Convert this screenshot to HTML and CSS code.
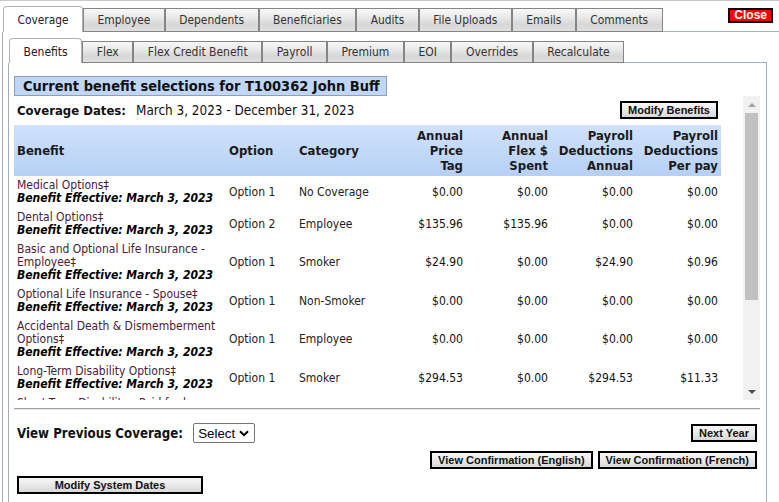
FILE: index.html
```html
<!DOCTYPE html>
<html>
<head>
<meta charset="utf-8">
<link rel="stylesheet" href="styles.css">
</head>
<body>
<div class="page">
  <div class="tabbar">
    <div class="tab active">Coverage</div>
    <div class="tab">Employee</div>
    <div class="tab">Dependents</div>
    <div class="tab">Beneficiaries</div>
    <div class="tab">Audits</div>
    <div class="tab">File Uploads</div>
    <div class="tab">Emails</div>
    <div class="tab">Comments</div>
    <div class="tab-fill"><button class="btn close">Close</button></div>
  </div>
  <div class="outer">
    <div class="subtabbar">
      <div class="subtab active">Benefits</div>
      <div class="subtab">Flex</div>
      <div class="subtab">Flex Credit Benefit</div>
      <div class="subtab">Payroll</div>
      <div class="subtab">Premium</div>
      <div class="subtab">EOI</div>
      <div class="subtab">Overrides</div>
      <div class="subtab">Recalculate</div>
      <div class="subtab-fill"></div>
    </div>
    <div class="inner">
      <div class="title">Current benefit selections for T100362 John Buff</div>
      <div class="scroll">
        <div class="scroll-content">
          <div class="dates-row">
            <span class="dates-label">Coverage Dates:</span>
            <span class="dates">March 3, 2023 - December 31, 2023</span>
            <button class="btn modify">Modify Benefits</button>
          </div>
          <table class="benefits">
            <colgroup>
              <col class="c-benefit"><col class="c-option"><col class="c-cat">
              <col class="c-num"><col class="c-num"><col class="c-num"><col class="c-num">
            </colgroup>
            <thead>
              <tr>
                <th class="left">Benefit</th>
                <th class="left">Option</th>
                <th class="left">Category</th>
                <th>Annual<br>Price<br>Tag</th>
                <th>Annual<br>Flex $<br>Spent</th>
                <th>Payroll<br>Deductions<br>Annual</th>
                <th>Payroll<br>Deductions<br>Per pay</th>
              </tr>
            </thead>
            <tbody>
              <tr>
                <td><div class="bname">Medical Options‡</div><div class="beff">Benefit Effective: March 3, 2023</div></td>
                <td>Option 1</td><td>No Coverage</td>
                <td class="num">$0.00</td><td class="num">$0.00</td><td class="num">$0.00</td><td class="num">$0.00</td>
              </tr>
              <tr>
                <td><div class="bname">Dental Options‡</div><div class="beff">Benefit Effective: March 3, 2023</div></td>
                <td>Option 2</td><td>Employee</td>
                <td class="num">$135.96</td><td class="num">$135.96</td><td class="num">$0.00</td><td class="num">$0.00</td>
              </tr>
              <tr>
                <td><div class="bname">Basic and Optional Life Insurance - Employee‡</div><div class="beff">Benefit Effective: March 3, 2023</div></td>
                <td>Option 1</td><td>Smoker</td>
                <td class="num">$24.90</td><td class="num">$0.00</td><td class="num">$24.90</td><td class="num">$0.96</td>
              </tr>
              <tr>
                <td><div class="bname">Optional Life Insurance - Spouse‡</div><div class="beff">Benefit Effective: March 3, 2023</div></td>
                <td>Option 1</td><td>Non-Smoker</td>
                <td class="num">$0.00</td><td class="num">$0.00</td><td class="num">$0.00</td><td class="num">$0.00</td>
              </tr>
              <tr>
                <td><div class="bname">Accidental Death &amp; Dismemberment Options‡</div><div class="beff">Benefit Effective: March 3, 2023</div></td>
                <td>Option 1</td><td>Employee</td>
                <td class="num">$0.00</td><td class="num">$0.00</td><td class="num">$0.00</td><td class="num">$0.00</td>
              </tr>
              <tr>
                <td><div class="bname">Long-Term Disability Options‡</div><div class="beff">Benefit Effective: March 3, 2023</div></td>
                <td>Option 1</td><td>Smoker</td>
                <td class="num">$294.53</td><td class="num">$0.00</td><td class="num">$294.53</td><td class="num">$11.33</td>
              </tr>
              <tr>
                <td><div class="bname">Short-Term Disability - Paid for by Employee‡</div><div class="beff">Benefit Effective: March 3, 2023</div></td>
                <td>Option 1</td><td>Employee</td>
                <td class="num">$0.00</td><td class="num">$0.00</td><td class="num">$0.00</td><td class="num">$0.00</td>
              </tr>
            </tbody>
          </table>
        </div>
        <div class="scrollbar">
          <div class="sb-btn"><span class="arrow-up"></span></div>
          <div class="sb-track"><div class="sb-thumb"></div></div>
          <div class="sb-btn"><span class="arrow-down"></span></div>
        </div>
      </div>
      <div class="rule"></div>
      <div class="footer">
        <div class="footer-row first">
          <div class="prev">
            <span class="prev-label">View Previous Coverage:</span>
            <span class="select-wrap">
              <select class="select"><option>Select</option></select>
              <svg class="chev" width="10" height="7" viewBox="0 0 10 7"><path d="M1 1.2 L5 5.2 L9 1.2" fill="none" stroke="#000" stroke-width="2"/></svg>
            </span>
          </div>
          <button class="btn">Next Year</button>
        </div>
        <div class="footer-row confirm">
          <button class="btn">View Confirmation (English)</button>
          <button class="btn">View Confirmation (French)</button>
        </div>
        <div class="footer-row last">
          <button class="btn sysdates">Modify System Dates</button>
        </div>
      </div>
    </div>
  </div>
</div>
</body>
</html>
```
FILE: styles.css
```css
html, body {
  margin: 0;
  height: 100%;
  background: #fff;
}
body {
  font-family: "DejaVu Sans Condensed", "DejaVu Sans", sans-serif;
  font-size: 12px;
  color: #222;
}
.page {
  box-sizing: border-box;
  height: 502px;
  border-top: 1px solid #c8c8c8;
  display: flex;
  flex-direction: column;
  overflow: hidden;
}

/* main tabs */
.tabbar {
  display: flex;
  align-items: flex-end;
  height: 31px;
  padding-left: 3px;
  flex-shrink: 0;
}
.tab {
  box-sizing: border-box;
  height: 24px;
  padding: 0 13.5px;
  line-height: 22px;
  font-size: 11.85px;
  color: #333;
  border: 1px solid #858585;
  background: linear-gradient(to bottom, #f8f8f8 0%, #e8e8e8 40%, #d7d7d7 70%, #e0e0e0 100%);
  white-space: nowrap;
}
.tab.active {
  height: 26px;
  padding: 2px 13.5px 1px;
  border-color: #b0b0b0;
  border-bottom: none;
  border-radius: 4px 4px 0 0;
  background: #fff;
  color: #222;
}
.tab-fill {
  flex: 1;
  align-self: stretch;
  border-bottom: 1px solid #9fb1c1;
  display: flex;
  justify-content: flex-end;
  align-items: flex-start;
  padding: 7px 6px 0 0;
}

/* outer panel */
.outer {
  flex: 1;
  margin-left: 2px;
  border-left: 1px solid #a3adb8;
  padding: 6px 0 0 5px;
  display: flex;
  flex-direction: column;
}
.subtabbar {
  display: flex;
  align-items: flex-end;
  width: 759px;
  padding-left: 1px;
  box-sizing: border-box;
  height: 25px;
  flex-shrink: 0;
}
.subtab {
  box-sizing: border-box;
  height: 22px;
  padding: 0 13.5px;
  line-height: 20px;
  font-size: 12px;
  color: #333;
  border: 1px solid #858585;
  background: linear-gradient(to bottom, #f8f8f8 0%, #e8e8e8 40%, #d7d7d7 70%, #e0e0e0 100%);
  white-space: nowrap;
}
.subtab.active {
  height: 25px;
  padding: 3px 13.5px 1px;
  border-color: #b0b0b0;
  border-bottom: none;
  border-radius: 4px 4px 0 0;
  background: #fff;
  color: #222;
}
.subtab-fill {
  flex: 1;
  align-self: stretch;
  border-bottom: 1px solid #9fb1c1;
}

/* inner panel */
.inner {
  flex: 1;
  width: 759px;
  box-sizing: border-box;
  border-left: 1px solid #a3adb8;
  border-right: 1px solid #9fb1c1;
  padding: 13px 6px 0 5px;
}
.title {
  width: fit-content;
  box-sizing: border-box;
  height: 20px;
  line-height: 18px;
  padding: 0 6px 0 8px;
  border: 1px solid #8c9fb8;
  background: #bfd6f7;
  font-weight: bold;
  font-size: 14.5px;
  color: #111;
  white-space: nowrap;
}

/* scroll area */
.scroll {
  display: flex;
  height: 304px;
}
.scroll-content {
  flex: 1;
  overflow: hidden;
  padding-top: 4px;
}
.dates-row {
  width: 707px;
  box-sizing: border-box;
  display: flex;
  align-items: center;
  height: 20px;
  padding: 0 3px;
  margin-bottom: 5px;
  color: #111;
}
.dates-label {
  font-weight: bold;
  font-size: 13px;
}
.dates {
  margin-left: 10px;
  font-size: 13.4px;
}
.btn.modify {
  margin-left: auto;
}

.benefits {
  width: 707px;
  table-layout: fixed;
  border-collapse: collapse;
}
.c-benefit { width: 212px; }
.c-option { width: 70px; }
.c-cat { width: 85px; }
.c-num { width: 85px; }
.benefits th {
  padding: 3px;
  font-size: 13px;
  line-height: 15px;
  font-weight: bold;
  text-align: right;
  vertical-align: middle;
  color: #1a1a1a;
  background: linear-gradient(to bottom, #cfe1fb 0%, #c3d9f8 50%, #b5cff5 100%);
}
.benefits th.left {
  text-align: left;
}
.benefits td {
  padding: 3px;
  line-height: 13px;
  vertical-align: middle;
  color: #222;
  white-space: nowrap;
}
.benefits td:first-child {
  white-space: normal;
}
.benefits td.num {
  text-align: right;
  color: #111;
}
.bname {
  color: #4a2238;
}
.beff {
  font-weight: bold;
  font-style: italic;
  color: #000;
}

/* fake scrollbar */
.scrollbar {
  width: 17px;
  background: #f1f1f1;
  display: flex;
  flex-direction: column;
}
.sb-btn {
  height: 17px;
  display: flex;
  align-items: center;
  justify-content: center;
}
.arrow-up {
  width: 0;
  height: 0;
  border-left: 4px solid transparent;
  border-right: 4px solid transparent;
  border-bottom: 4px solid #a3a3a3;
}
.arrow-down {
  width: 0;
  height: 0;
  border-left: 4px solid transparent;
  border-right: 4px solid transparent;
  border-top: 4px solid #505050;
}
.sb-track {
  flex: 1;
}
.sb-thumb {
  margin-left: 2px;
  width: 13px;
  height: 187px;
  background: #c1c1c1;
}

.rule {
  margin-top: 8px;
  border-top: 1px solid #a0a0a0;
  border-bottom: 1px solid #e8e8e8;
}

/* footer */
.footer {
  padding: 0 3px;
}
.footer-row {
  display: flex;
  align-items: center;
}
.footer-row.first {
  margin-top: 13px;
  height: 20px;
  justify-content: space-between;
}
.prev {
  display: flex;
  align-items: center;
}
.prev-label {
  font-weight: bold;
  font-size: 13.2px;
  color: #111;
}
.select-wrap {
  position: relative;
  margin-left: 10px;
  display: flex;
}
.select {
  appearance: none;
  -webkit-appearance: none;
  box-sizing: border-box;
  width: 62px;
  height: 20px;
  border: 1px solid #767676;
  border-radius: 2px;
  background: #fff;
  padding: 0 0 0 4px;
  font-family: "Liberation Sans", Arial, sans-serif;
  font-size: 13.33px;
  color: #000;
  margin: 0;
}
.chev {
  position: absolute;
  right: 6px;
  top: 7px;
  pointer-events: none;
}
.footer-row.confirm {
  margin-top: 8px;
  justify-content: flex-end;
  gap: 5px;
}
.footer-row.last {
  margin-top: 7px;
}

/* buttons */
.btn {
  box-sizing: border-box;
  height: 18px;
  margin: 0;
  padding: 0 6px;
  border: 2px solid #000;
  border-radius: 0;
  background: linear-gradient(to bottom, #f7f7f7 0%, #e6e6e6 60%, #d8d8d8 100%);
  font-family: "Liberation Sans", Arial, sans-serif;
  font-size: 11px;
  font-weight: bold;
  line-height: 14px;
  color: #111;
  white-space: nowrap;
}
.btn.sysdates {
  width: 186px;
}
.btn.close {
  height: 15px;
  line-height: 11px;
  padding: 0 4px;
  background: #f00;
  color: #fff;
  font-size: 12px;
}
```
